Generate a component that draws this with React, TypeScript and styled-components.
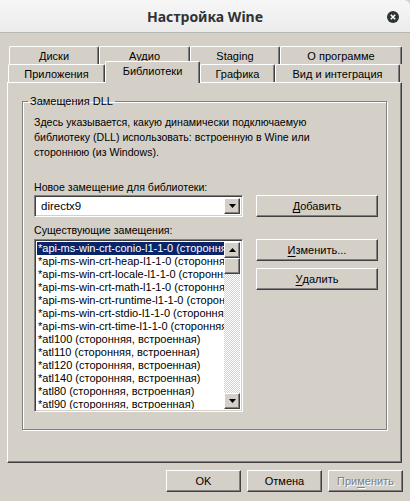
import styled, { createGlobalStyle, css } from "styled-components";

const colors = {
  face: "#d4d0c8",
  light: "#ffffff",
  shadow: "#808080",
  dark: "#404040",
  text: "#000000",
  selected: "#0a246a",
  titleText: "#2e3436",
};

const GlobalStyle = createGlobalStyle`
  html, body {
    margin: 0;
    padding: 0;
    background: ${colors.face};
  }
  body {
    font-family: "Liberation Sans", Arial, sans-serif;
    font-size: 11px;
    color: ${colors.text};
  }
`;

const raised = css`
  border-top: 1px solid ${colors.light};
  border-left: 1px solid ${colors.light};
  border-right: 1px solid ${colors.dark};
  border-bottom: 1px solid ${colors.dark};
  box-shadow: inset -1px -1px 0 ${colors.shadow};
`;

const sunken = css`
  border-top: 1px solid ${colors.shadow};
  border-left: 1px solid ${colors.shadow};
  border-right: 1px solid ${colors.light};
  border-bottom: 1px solid ${colors.light};
  box-shadow: inset 1px 1px 0 ${colors.dark}, inset -1px -1px 0 ${colors.face};
`;

const Window = styled.div`
  width: 410px;
  height: 501px;
  display: flex;
  flex-direction: column;
  background: ${colors.face};
  overflow: hidden;
`;

const TitleBar = styled.div`
  height: 32px;
  flex-shrink: 0;
  display: flex;
  align-items: center;
  justify-content: center;
  position: relative;
  background: linear-gradient(#f6f6f6, #ececec);
  border-bottom: 1px solid #b8b6b0;
  border-top-right-radius: 6px;
`;

const Title = styled.div`
  font-family: "Noto Sans", "DejaVu Sans", sans-serif;
  font-weight: bold;
  font-size: 14px;
  color: ${colors.titleText};
  padding-top: 1px;
`;

const CloseButton = styled.div`
  position: absolute;
  right: 11px;
  top: 11px;
  width: 12px;
  height: 12px;
  display: flex;
  align-items: center;
  justify-content: center;
`;

const Body = styled.div`
  flex: 1;
  display: flex;
  flex-direction: column;
  padding: 13px 8px 0 7px;
`;

const TabRow = styled.div<{ $indent: number }>`
  display: flex;
  height: 18px;
  padding-left: ${(p) => p.$indent}px;
  position: relative;
  z-index: 1;
`;

const Tab = styled.div<{ $width: number; $active?: boolean }>`
  width: ${(p) => p.$width}px;
  box-sizing: border-box;
  display: flex;
  align-items: center;
  justify-content: center;
  border-top: 1px solid ${colors.light};
  border-left: 1px solid ${colors.light};
  border-right: 1px solid ${colors.dark};
  box-shadow: inset -1px 0 0 ${colors.shadow};
  border-top-left-radius: 2px;
  border-top-right-radius: 2px;
  background: ${colors.face};
  padding-top: 0;
  white-space: nowrap;
  ${(p) =>
    p.$active &&
    css`
      margin-top: -3px;
      height: 22px;
      margin-bottom: -1px;
      align-items: flex-start;
      padding-top: 3px;
      position: relative;
      z-index: 2;
    `}
`;

const Panel = styled.div`
  flex-shrink: 0;
  height: 381px;
  box-sizing: border-box;
  ${raised};
  padding: 12px 14px 32px 14px;
  display: flex;
`;

const GroupBox = styled.fieldset`
  flex: 1;
  margin: 0;
  min-width: 0;
  border: 1px solid ${colors.shadow};
  box-shadow: 1px 1px 0 ${colors.light}, inset 1px 1px 0 ${colors.light};
  padding: 8px 11px 0 11px;
`;

const Legend = styled.legend`
  padding: 0 2px;
  margin-left: -6px;
`;

const Description = styled.p`
  margin: 0;
  line-height: 15px;
  font-size: 10.6px;
`;

const Form = styled.div`
  display: grid;
  grid-template-columns: 209px 122px;
  column-gap: 13px;
  margin-top: 20px;
`;

const FieldLabel = styled.div<{ $gap: number }>`
  grid-column: 1 / span 2;
  line-height: 15px;
  font-size: 10.6px;
  margin-bottom: ${(p) => p.$gap}px;
`;

const ComboBox = styled.div`
  height: 22px;
  box-sizing: border-box;
  ${sunken};
  background: ${colors.light};
  display: flex;
  align-items: center;
  padding: 2px;
  margin-bottom: 6px;
`;

const ComboText = styled.div`
  flex: 1;
  padding-left: 4px;
  font-size: 11.5px;
`;

const ArrowButton = styled.div`
  width: 16px;
  height: 16px;
  box-sizing: border-box;
  ${raised};
  background: ${colors.face};
  display: flex;
  align-items: center;
  justify-content: center;
  flex-shrink: 0;
`;

const Button = styled.div<{ $disabled?: boolean }>`
  height: 22px;
  box-sizing: border-box;
  ${raised};
  background: ${colors.face};
  display: flex;
  align-items: center;
  justify-content: center;
  white-space: nowrap;
  ${(p) =>
    p.$disabled &&
    css`
      color: ${colors.shadow};
      text-shadow: 1px 1px 0 ${colors.light};
    `}

  u {
    text-decoration-thickness: 1px;
    text-underline-offset: 2px;
  }
`;

const ButtonStack = styled.div`
  display: flex;
  flex-direction: column;
  gap: 7px;
`;

const ListBox = styled.div`
  height: 173px;
  box-sizing: border-box;
  ${sunken};
  background: ${colors.light};
  padding: 2px;
  display: flex;
  overflow: hidden;
`;

const ListItems = styled.div`
  flex: 1;
  min-width: 0;
  overflow: hidden;
`;

const ListItem = styled.div<{ $selected?: boolean }>`
  height: 13px;
  line-height: 13px;
  font-size: 11px;
  white-space: nowrap;
  overflow: hidden;
  padding-left: 1px;
  ${(p) =>
    p.$selected &&
    css`
      background: ${colors.selected};
      color: ${colors.light};
    `}
`;

const ScrollBar = styled.div`
  width: 16px;
  flex-shrink: 0;
  display: flex;
  flex-direction: column;
`;

const ScrollTrack = styled.div`
  flex: 1;
  background-color: ${colors.light};
  background-image: repeating-conic-gradient(
    ${colors.face} 0 25%,
    ${colors.light} 0 50%
  );
  background-size: 2px 2px;
`;

const Thumb = styled.div`
  height: 16px;
  box-sizing: border-box;
  ${raised};
  background: ${colors.face};
`;

const Footer = styled.div`
  display: flex;
  justify-content: flex-end;
  gap: 6px;
  padding-top: 7px;
  margin-right: -1px;
`;

const FooterButton = styled(Button)`
  width: 75px;
  height: 22px;
`;

const Triangle = ({ up }: { up?: boolean }) => (
  <svg width="7" height="4" viewBox="0 0 7 4">
    <polygon points={up ? "3.5,0 7,4 0,4" : "0,0 7,0 3.5,4"} fill="#000" />
  </svg>
);

const topTabs = [
  { label: "Диски", width: 90 },
  { label: "Аудио", width: 91 },
  { label: "Staging", width: 90 },
  { label: "О программе", width: 122 },
];

const bottomTabs = [
  { label: "Приложения", width: 97 },
  { label: "Библиотеки", width: 95, active: true },
  { label: "Графика", width: 75 },
  { label: "Вид и интеграция", width: 125 },
];

const overrides = [
  "*api-ms-win-crt-conio-l1-1-0 (сторонняя, встроенная)",
  "*api-ms-win-crt-heap-l1-1-0 (сторонняя, встроенная)",
  "*api-ms-win-crt-locale-l1-1-0 (сторонняя, встроенная)",
  "*api-ms-win-crt-math-l1-1-0 (сторонняя, встроенная)",
  "*api-ms-win-crt-runtime-l1-1-0 (сторонняя, встроенная)",
  "*api-ms-win-crt-stdio-l1-1-0 (сторонняя, встроенная)",
  "*api-ms-win-crt-time-l1-1-0 (сторонняя, встроенная)",
  "*atl100 (сторонняя, встроенная)",
  "*atl110 (сторонняя, встроенная)",
  "*atl120 (сторонняя, встроенная)",
  "*atl140 (сторонняя, встроенная)",
  "*atl80 (сторонняя, встроенная)",
  "*atl90 (сторонняя, встроенная)",
  "*atl (сторонняя, встроенная)",
];

const App = () => {
  return (
    <Window>
      <GlobalStyle />
      <TitleBar>
        <Title>Настройка Wine</Title>
        <CloseButton>
          <svg width="12" height="12" viewBox="0 0 12 12">
            <circle cx="6" cy="6" r="6" fill={colors.titleText} />
            <path d="M3.8 3.8 L8.2 8.2 M8.2 3.8 L3.8 8.2" stroke="#fff" strokeWidth="1.6" />
          </svg>
        </CloseButton>
      </TitleBar>

      <Body>
        <TabRow $indent={2}>
          {topTabs.map((t) => (
            <Tab key={t.label} $width={t.width}>
              {t.label}
            </Tab>
          ))}
        </TabRow>
        <TabRow $indent={1}>
          {bottomTabs.map((t) => (
            <Tab key={t.label} $width={t.width} $active={t.active}>
              {t.label}
            </Tab>
          ))}
        </TabRow>

        <Panel>
          <GroupBox>
            <Legend>Замещения DLL</Legend>
            <Description>
              Здесь указывается, какую динамически подключаемую
              <br />
              библиотеку (DLL) использовать: встроенную в Wine или
              <br />
              стороннюю (из Windows).
            </Description>

            <Form>
              <FieldLabel $gap={0}>Новое замещение для библиотеки:</FieldLabel>
              <ComboBox>
                <ComboText>directx9</ComboText>
                <ArrowButton>
                  <Triangle />
                </ArrowButton>
              </ComboBox>
              <Button>
                <u>Д</u>обавить
              </Button>

              <FieldLabel $gap={1}>Существующие замещения:</FieldLabel>
              <ListBox>
                <ListItems>
                  {overrides.map((o, i) => (
                    <ListItem key={o} $selected={i === 0}>
                      {o}
                    </ListItem>
                  ))}
                </ListItems>
                <ScrollBar>
                  <ArrowButton>
                    <Triangle up />
                  </ArrowButton>
                  <Thumb />
                  <ScrollTrack />
                  <ArrowButton>
                    <Triangle />
                  </ArrowButton>
                </ScrollBar>
              </ListBox>
              <ButtonStack>
                <Button>
                  <u>И</u>зменить...
                </Button>
                <Button>
                  <u>У</u>далить
                </Button>
              </ButtonStack>
            </Form>
          </GroupBox>
        </Panel>

        <Footer>
          <FooterButton>OK</FooterButton>
          <FooterButton>Отмена</FooterButton>
          <FooterButton $disabled>
            При<u>м</u>енить
          </FooterButton>
        </Footer>
      </Body>
    </Window>
  );
};

export default App;
